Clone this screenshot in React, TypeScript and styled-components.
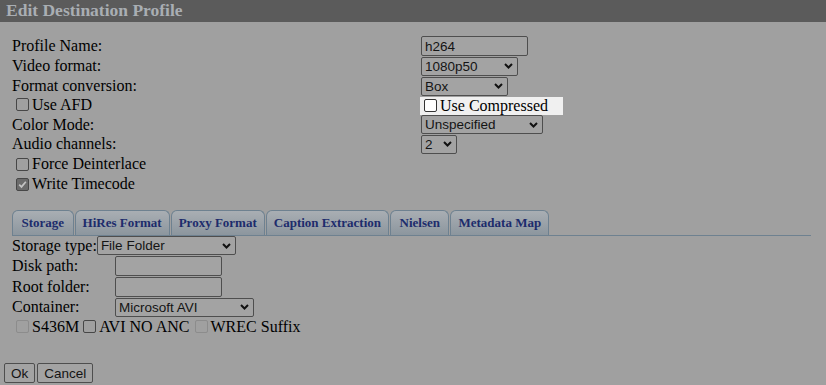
import React from "react";
import styled, { createGlobalStyle } from "styled-components";

const Global = createGlobalStyle`
  html, body { margin: 0; padding: 0; background: #a0a0a0; }
  body { width: 826px; height: 385px; overflow: hidden; font-family: "Liberation Serif", "Times New Roman", serif; color: #000; }
`;

const Page = styled.div`
  width: 826px;
  height: 385px;
  background: #a0a0a0;
  display: flex;
  flex-direction: column;
`;

const TitleBar = styled.div`
  height: 22px;
  line-height: 21px;
  background: #5b5b5b;
  color: #a9aeb3;
  font-family: "Liberation Serif", serif;
  font-weight: bold;
  font-size: 17.5px;
  padding-left: 6px;
`;

const Content = styled.div`
  padding: 14px 15px 0 12px;
  display: flex;
  flex-direction: column;
`;

const Row = styled.div<{ $h: number }>`
  height: ${(p) => p.$h}px;
  display: flex;
  align-items: center;
  font-size: 16px;
`;

const Label = styled.div<{ $w?: number }>`
  width: ${(p) => (p.$w ? `${p.$w}px` : "auto")};
  flex: none;
  white-space: nowrap;
`;

const TextInput = styled.input`
  box-sizing: border-box;
  width: ${(p) => p.width}px;
  height: 20px;
  margin: 0;
  padding: 1px 3px;
  border: 1px solid #4e4e4e;
  border-radius: 2px;
  background: #a3a3a3;
  font-family: "Liberation Sans", Arial, sans-serif;
  font-size: 13.5px;
  color: #141414;
  outline: none;
`;

const SelectWrap = styled.span`
  position: relative;
  display: inline-flex;
`;

const Select = styled.select<{ $w: number; $h?: number }>`
  box-sizing: border-box;
  appearance: none;
  width: ${(p) => p.$w}px;
  height: ${(p) => p.$h ?? 19}px;
  margin: 0;
  padding: 0 0 0 3px;
  border: 1px solid #4e4e4e;
  border-radius: 2px;
  background: #a3a3a3;
  font-family: "Liberation Sans", Arial, sans-serif;
  font-size: 13.5px;
  color: #141414;
  outline: none;
`;

const Chevron = styled.svg`
  position: absolute;
  right: 5px;
  top: 50%;
  margin-top: -3px;
  width: 9px;
  height: 6px;
  pointer-events: none;
`;

const Dropdown = ({ w, h, value }: { w: number; h?: number; value: string }) => (
  <SelectWrap>
    <Select $w={w} $h={h} defaultValue={value}>
      <option>{value}</option>
    </Select>
    <Chevron viewBox="0 0 9 6">
      <path d="M1 1 L4.5 4.5 L8 1" fill="none" stroke="#111" strokeWidth="2" />
    </Chevron>
  </SelectWrap>
);

const CheckLabel = styled.label`
  display: inline-flex;
  align-items: center;
  font-size: 16px;
  white-space: nowrap;
`;

const Box = styled.span<{ $checked?: boolean; $disabled?: boolean; $light?: boolean }>`
  box-sizing: border-box;
  width: 13px;
  height: 13px;
  margin: 0 3px 0 4px;
  border-radius: 2px;
  border: 1px solid ${(p) => (p.$disabled ? "#8c8c8c" : p.$light ? "#333" : "#474747")};
  background: ${(p) => (p.$checked ? "#6b6b6b" : p.$light ? "#fff" : "#a0a0a0")};
  display: inline-flex;
  align-items: center;
  justify-content: center;
  flex: none;
`;

const Check = ({ checked, disabled, light }: { checked?: boolean; disabled?: boolean; light?: boolean }) => (
  <Box $checked={checked} $disabled={disabled} $light={light}>
    {checked && (
      <svg width="9" height="9" viewBox="0 0 9 9">
        <path d="M1.2 4.6 L3.5 6.9 L7.8 1.8" fill="none" stroke="#c4c4c4" strokeWidth="1.7" />
      </svg>
    )}
  </Box>
);

const Highlight = styled.div`
  margin-left: -1px;
  width: 143px;
  height: 18px;
  background: #f0f0f0;
  display: flex;
  align-items: center;
`;

const TabStrip = styled.div`
  margin-top: 16px;
  width: 799px;
  height: 26px;
  display: flex;
  align-items: flex-end;
  gap: 1px;
  border-bottom: 1px solid #6e8190;
  box-sizing: border-box;
`;

const Tab = styled.div<{ $pad?: number }>`
  height: 25px;
  box-sizing: border-box;
  padding: 0 ${(p) => p.$pad ?? 7}px;
  display: flex;
  align-items: center;
  border: 1px solid #6e8190;
  border-bottom: none;
  border-radius: 6px 6px 0 0;
  background: linear-gradient(#a9aeb3, #8c969e);
  color: #1d2c6c;
  font-weight: bold;
  font-size: 13px;
  white-space: nowrap;
`;

const Buttons = styled.div`
  margin-top: 27px;
  padding-left: 4px;
  display: flex;
  gap: 2px;
`;

const Button = styled.button`
  height: 20px;
  box-sizing: border-box;
  margin: 0;
  padding: 0 6px;
  border: 1px solid #4e4e4e;
  border-radius: 2px;
  background: #a3a3a3;
  font-family: "Liberation Sans", Arial, sans-serif;
  font-size: 13.5px;
  color: #141414;
`;

const Gap = styled.span<{ $w: number }>`
  display: inline-block;
  width: ${(p) => p.$w}px;
`;

export default function App() {
  return (
    <Page>
      <Global />
      <TitleBar>Edit Destination Profile</TitleBar>
      <Content>
        <Row $h={20}>
          <Label $w={409}>Profile Name:</Label>
          <TextInput width={107} defaultValue="h264" />
        </Row>
        <Row $h={20}>
          <Label $w={409}>Video format:</Label>
          <Dropdown w={97} value="1080p50" />
        </Row>
        <Row $h={20}>
          <Label $w={409}>Format conversion:</Label>
          <Dropdown w={87} value="Box" />
        </Row>
        <Row $h={19}>
          <Label $w={409}>
            <CheckLabel>
              <Check />
              Use AFD
            </CheckLabel>
          </Label>
          <Highlight>
            <CheckLabel>
              <Check light />
              Use Compressed
            </CheckLabel>
          </Highlight>
        </Row>
        <Row $h={19}>
          <Label $w={409}>Color Mode:</Label>
          <Dropdown w={122} value="Unspecified" />
        </Row>
        <Row $h={20}>
          <Label $w={409}>Audio channels:</Label>
          <Dropdown w={36} value="2" />
        </Row>
        <Row $h={20}>
          <CheckLabel>
            <Check />
            Force Deinterlace
          </CheckLabel>
        </Row>
        <Row $h={20}>
          <CheckLabel>
            <Check checked />
            Write Timecode
          </CheckLabel>
        </Row>

        <TabStrip>
          <Tab $pad={8.5}>Storage</Tab>
          <Tab>HiRes Format</Tab>
          <Tab>Proxy Format</Tab>
          <Tab>Caption Extraction</Tab>
          <Tab $pad={8.5}>Nielsen</Tab>
          <Tab>Metadata Map</Tab>
        </TabStrip>

        <Row $h={19}>
          <Label>Storage type:</Label>
          <Dropdown w={139} value="File Folder" />
        </Row>
        <Row $h={21}>
          <Label $w={103}>Disk path:</Label>
          <TextInput width={107} />
        </Row>
        <Row $h={21}>
          <Label $w={103}>Root folder:</Label>
          <TextInput width={107} />
        </Row>
        <Row $h={20}>
          <Label $w={103}>Container:</Label>
          <Dropdown w={139} value="Microsoft AVI" />
        </Row>
        <Row $h={19}>
          <CheckLabel>
            <Check disabled />
            S436M
          </CheckLabel>
          <CheckLabel>
            <Check />
            AVI NO ANC
          </CheckLabel>
          <Gap $w={1} />
          <CheckLabel>
            <Check disabled />
            WREC Suffix
          </CheckLabel>
        </Row>
      </Content>
      <Buttons>
        <Button>Ok</Button>
        <Button>Cancel</Button>
      </Buttons>
    </Page>
  );
}
